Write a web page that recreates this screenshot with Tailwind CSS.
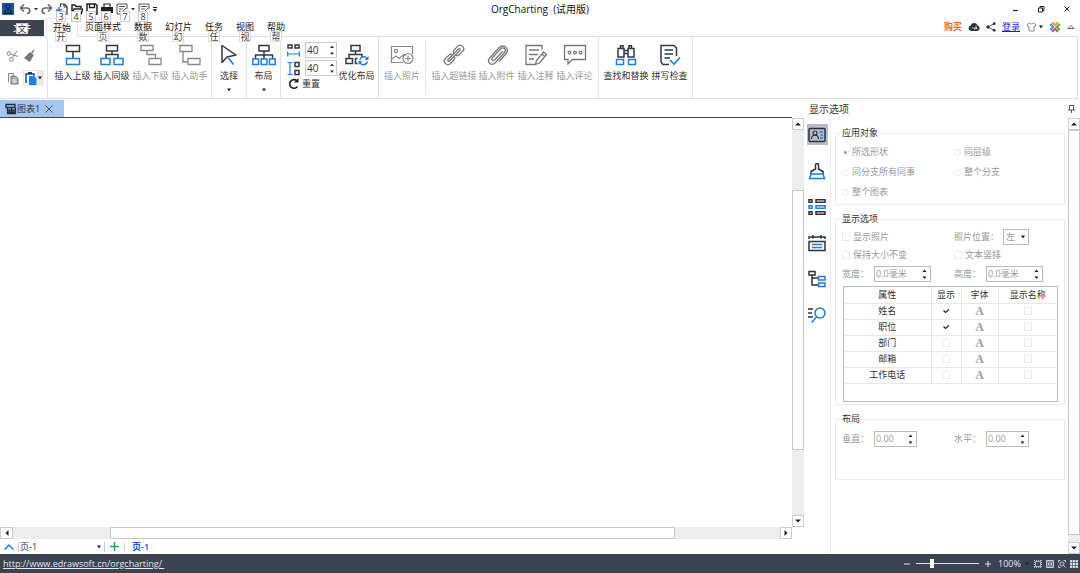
<!DOCTYPE html>
<html lang="zh-CN">
<head>
  <meta charset="UTF-8" />
  <meta name="viewport" content="width=device-width, initial-scale=1.0" />
  <title>OrgCharting (试用版)</title>
  <script src="https://cdn.jsdelivr.net/npm/@tailwindcss/browser@4"></script>
</head>
<body class="h-screen flex flex-col overflow-hidden bg-white text-[#333] text-[9px] leading-[12px] font-['Open_Sans','Noto_Sans_CJK_SC',sans-serif]">

  <!-- title bar -->
  <header class="relative z-20 flex items-center h-[18px] shrink-0">
    <div class="flex items-center gap-[3px] pl-[2px]">
      <svg class="w-3 h-3 mr-[2px]" viewBox="0 0 12 12"><rect width="12" height="12" fill="#15589f"/><path d="M4 2h4v3H4zM6 5v2M3 9V7h6v2M2 9h2v1.500H2zM5 9h2v1.500H5zM8 9h2v1.500H8z" fill="none" stroke="#0b2440"/></svg>
      <button aria-label="撤销"><svg class="w-3 h-3" viewBox="0 0 12 12"><path d="M2 5h6a2.500 2.500 0 0 1 0 5.500M5 1.500 1.500 5 5 8.500" fill="none" stroke="#6b6b6b" stroke-width="1.700"/></svg></button>
      <button aria-label="撤销列表"><svg class="w-1 h-1" viewBox="0 0 4 4"><path d="M0 1h4L2 3.500z" fill="#333"/></svg></button>
      <button aria-label="重做"><svg class="w-3 h-3" viewBox="0 0 12 12"><path d="M10 5H4a2.500 2.500 0 0 0 0 5.500M7 1.500 10.500 5 7 8.500" fill="none" stroke="#6b6b6b" stroke-width="1.700"/></svg></button>
      <button class="relative" aria-label="新建"><svg class="w-3 h-3" viewBox="0 0 12 12"><path d="M4.500 4V1h4L11 3.500V12" fill="none" stroke="#333" stroke-width="1.200"/><path d="M8 1v3h3" fill="none" stroke="#333"/><path d="M0 7h6M3 4v6" stroke="#1a7fe8" stroke-width="1.500"/></svg><kbd class="absolute left-0 top-2 w-[10px] h-[11px] text-center leading-[9px] font-[inherit] text-[9px] text-[#333] bg-white border border-[#ccc]">3</kbd></button>
      <button class="relative" aria-label="打开"><svg class="w-3 h-3" viewBox="0 0 12 12"><path d="M1 11V2h3l1 1.500h5V5M1 11l2-5h9l-2 5z" fill="none" stroke="#222" stroke-width="1.500"/></svg><kbd class="absolute left-0 top-2 w-[10px] h-[11px] text-center leading-[9px] font-[inherit] text-[9px] text-[#333] bg-white border border-[#ccc]">4</kbd></button>
      <button class="relative" aria-label="保存"><svg class="w-3 h-3" viewBox="0 0 12 12"><path d="M1 1h8.500L11 2.500V11H1z" fill="none" stroke="#222" stroke-width="1.500"/><path d="M3.500 1v3.500h5V1" fill="none" stroke="#222" stroke-width="1.300"/></svg><kbd class="absolute left-0 top-2 w-[10px] h-[11px] text-center leading-[9px] font-[inherit] text-[9px] text-[#333] bg-white border border-[#ccc]">5</kbd></button>
      <button class="relative" aria-label="打印"><svg class="w-3 h-3" viewBox="0 0 12 12"><path d="M3 4V1h6v3" fill="none" stroke="#222" stroke-width="1.200"/><path d="M0 4h12v6H0z" fill="#222"/></svg><kbd class="absolute left-0 top-2 w-[10px] h-[11px] text-center leading-[9px] font-[inherit] text-[9px] text-[#333] bg-white border border-[#ccc]">6</kbd></button>
      <button class="relative" aria-label="导出"><svg class="w-3 h-3" viewBox="0 0 12 12"><path d="M11 6V1H1v10h3M3 3.500h6M3 6h4M3 8.500h2" fill="none" stroke="#555"/><path d="M6 9 10.500 4.500" stroke="#1a7fe8"/></svg><kbd class="absolute left-1 top-2 w-[10px] h-[11px] text-center leading-[9px] font-[inherit] text-[9px] text-[#333] bg-white border border-[#ccc]">7</kbd></button>
      <button aria-label="导出列表"><svg class="w-1 h-1" viewBox="0 0 4 4"><path d="M0 1h4L2 3.500z" fill="#333"/></svg></button>
      <button class="relative" aria-label="属性"><svg class="w-3 h-3" viewBox="0 0 12 12"><path d="M11 6V1H1v10h3M3 3.500h6M3 6h4M3 8.500h2" fill="none" stroke="#555"/><path d="M6 9 10.500 4.500" stroke="#1a7fe8"/></svg><kbd class="absolute left-0 top-2 w-[10px] h-[11px] text-center leading-[9px] font-[inherit] text-[9px] text-[#333] bg-white border border-[#ccc]">8</kbd></button>
      <button aria-label="自定义"><svg class="w-1 h-[5px]" viewBox="0 0 4 5"><path d="M0 0h4v1H0zM0 2h4L2 5z" fill="#222"/></svg></button>
    </div>
    <h1 class="absolute inset-x-0 top-[3px] text-center text-[10px] text-[#111] pointer-events-none">OrgCharting&nbsp; (试用版)</h1>
    <div class="flex items-center gap-[18px] ml-auto pr-[9px]">
      <button aria-label="最小化"><svg class="w-2 h-2" viewBox="0 0 8 8"><path d="M2 5.500h5" stroke="#222" stroke-width="1.200"/></svg></button>
      <button aria-label="还原"><svg class="w-2 h-2" viewBox="0 0 8 8"><path d="M1.500 3h4v4h-4zM3 3V1.500h4v4H5.500" fill="none" stroke="#222"/></svg></button>
      <button aria-label="关闭"><svg class="w-2 h-2" viewBox="0 0 8 8"><path d="M1.500 1.500l5 5M6.500 1.500l-5 5" stroke="#222"/></svg></button>
    </div>
  </header>

  <!-- menu row -->
  <nav class="relative z-10 flex h-[18px] shrink-0 text-[#111]">
    <button class="relative w-11 h-4 mt-[2px] bg-[#3b4250] text-white">文件<kbd class="absolute left-4 top-[3px] w-[12px] h-[11px] text-center leading-[9px] font-[inherit] text-[9px] text-[#333] bg-white border border-[#ccc]">文</kbd></button>
    <div class="flex gap-[13px] pl-[2px]">
      <button class="relative h-[19px] px-[6px] -mr-[6px] bg-white border-x border-t border-[#e6e6e6]">开始<kbd class="absolute left-2 top-[12px] w-[12px] h-[11px] text-center leading-[9px] font-[inherit] text-[9px] text-[#444] bg-white border border-[#ddd]">开</kbd></button>
      <button class="relative">页面样式<kbd class="absolute left-3 top-[13px] w-[12px] h-[11px] text-center leading-[9px] font-[inherit] text-[9px] text-[#444] bg-white border border-[#ddd]">页</kbd></button>
      <button class="relative">数据<kbd class="absolute left-[3px] top-[13px] w-[12px] h-[11px] text-center leading-[9px] font-[inherit] text-[9px] text-[#444] bg-white border border-[#ddd]">数</kbd></button>
      <button class="relative">幻灯片<kbd class="absolute left-[7px] top-[13px] w-[12px] h-[11px] text-center leading-[9px] font-[inherit] text-[9px] text-[#444] bg-white border border-[#ddd]">幻</kbd></button>
      <button class="relative">任务<kbd class="absolute left-[3px] top-[13px] w-[12px] h-[11px] text-center leading-[9px] font-[inherit] text-[9px] text-[#444] bg-white border border-[#ddd]">任</kbd></button>
      <button class="relative">视图<kbd class="absolute left-[3px] top-[13px] w-[12px] h-[11px] text-center leading-[9px] font-[inherit] text-[9px] text-[#444] bg-white border border-[#ddd]">视</kbd></button>
      <button class="relative">帮助<kbd class="absolute left-[3px] top-[13px] w-[12px] h-[11px] text-center leading-[9px] font-[inherit] text-[9px] text-[#444] bg-white border border-[#ddd]">帮</kbd></button>
    </div>
    <div class="flex items-center gap-[6px] ml-auto pr-[5px]">
      <a href="#" class="font-bold text-[#ff6a13]">购买</a>
      <button aria-label="云"><svg class="w-3 h-3" viewBox="0 0 12 12"><path d="M3 10a2.800 2.800 0 0 1-.3-5.500A3.600 3.600 0 0 1 9.500 4.500 2.800 2.800 0 0 1 9.300 10z" fill="#2c323b"/><path d="M4 7.500 5.500 6M6 8l2-2.500 1 2z" stroke="#fff" stroke-width=".8" fill="none"/></svg></button>
      <button aria-label="分享"><svg class="w-[10px] h-[10px]" viewBox="0 0 10 10"><path d="M8 1.700 2 5l6 3.300" fill="none" stroke="#2c323b" stroke-width=".8"/><circle cx="2" cy="5" r="1.700" fill="#2c323b"/><circle cx="8.200" cy="1.700" r="1.400" fill="#2c323b"/><circle cx="8.200" cy="8.300" r="1.400" fill="#2c323b"/></svg></button>
      <a href="#" class="text-[#1a1aff] underline">登录</a>
      <button class="flex items-center gap-[2px]" aria-label="皮肤"><svg class="w-[11px] h-[10px]" viewBox="0 0 11 10"><path d="M4 1 1 2.500 2 5l1-.5V9h5V4.500L9 5l1-2.500L7 1C6.500 2.300 4.500 2.300 4 1z" fill="none" stroke="#777" stroke-width=".8"/></svg><svg class="w-1 h-1" viewBox="0 0 4 4"><path d="M0 .5h4L2 3.500z" fill="#222"/></svg></button>
      <button aria-label="亿图"><svg class="w-3 h-3" viewBox="0 0 12 12" stroke-width="2.200" fill="none"><path d="M3 1.200 6 4.200l3-3" stroke="#f9a21b"/><path d="M10.800 3 7.800 6l3 3" stroke="#52b947"/><path d="M9 10.800 6 7.800l-3 3" stroke="#ee3f7c"/><path d="M1.200 9l3-3-3-3" stroke="#2aa7df"/></svg></button>
      <button aria-label="折叠功能区"><svg class="w-2 h-2" viewBox="0 0 8 8"><path d="M1 5.500 4 2.500l3 3z" fill="none" stroke="#555" stroke-width=".9"/></svg></button>
    </div>
  </nav>

  <!-- ribbon -->
  <section class="flex h-[63px] shrink-0 mr-[2px] border-t border-b border-r border-[#dedede]">
    <div class="grid grid-cols-[16px_21px] grid-rows-[22px_22px] gap-x-[1px] w-12 pl-[6px] pt-[8px] border-r border-[#e2e2e2] content-start items-center">
      <button aria-label="剪切"><svg class="w-[14px] h-3" viewBox="0 0 14 12"><g fill="none" stroke="#888"><circle cx="3" cy="3.500" r="1.800"/><circle cx="5.500" cy="9.500" r="1.800"/><path d="M4.800 4.200 12 6.500M6 7.700 11 1"/></g></svg></button>
      <button aria-label="格式刷"><svg class="w-[14px] h-3" viewBox="0 0 14 12"><path d="M11 0 8 4M7 3l3 2.500L6.500 11 2 8z" stroke="#777" stroke-width="1.300" fill="#777"/></svg></button>
      <button aria-label="复制"><svg class="w-[14px] h-[13px]" viewBox="0 0 14 13"><path d="M2.500 10.500v-9h5v2" fill="none" stroke="#888"/><path d="M5 4h4.500L12 6.500V12H5z" fill="#aaa" stroke="#777"/><path d="M6.500 8h4M6.500 10h4" stroke="#fff"/></svg></button>
      <span class="flex h-4 border border-[#e4eaf2]">
        <button aria-label="粘贴" class="pl-[1px]"><svg class="w-[12px] h-[13px]" viewBox="0 0 12 13"><path d="M1 11V2h8v2" fill="none" stroke="#1f3d66" stroke-width="1.400"/><path d="M3 0h4v2H3z" fill="#1f3d66"/><path d="M4 4h5l2.500 2.500V13H4z" fill="#1a7fe8"/></svg></button>
        <button aria-label="粘贴选项" class="grid place-items-center w-[6px] bg-[#e8e8e8]"><svg class="w-1 h-1" viewBox="0 0 4 4"><path d="M0 .5h4L2 3.500z" fill="#222"/></svg></button>
      </span>
    </div>

    <div class="flex items-start pl-[5px] w-[164px] pt-[7px] border-r border-[#e2e2e2]">
      <button class="flex flex-col items-center gap-[4px] w-[39px] whitespace-nowrap"><svg class="w-6 h-[22px]" viewBox="0 0 24 22" fill="none" stroke-width="1.500"><path d="M5.500 1.500h13v6h-13zM12 7.500V14" stroke="#333a44"/><path d="M5.500 14.500h13v6h-13z" stroke="#1a7fe8"/></svg>插入上级</button>
      <button class="flex flex-col items-center gap-[4px] w-[39px] whitespace-nowrap"><svg class="w-6 h-[22px]" viewBox="0 0 24 22" fill="none" stroke-width="1.500"><path d="M6.500 1.500h11v5.500h-11zM12 7v3.500M6 14.500v-4h12v4" stroke="#333a44"/><path d="M1 14.500h9v6H1zM14 14.500h9v6h-9z" stroke="#1a7fe8"/></svg>插入同级</button>
      <button disabled class="flex flex-col items-center gap-[4px] w-[39px] whitespace-nowrap text-[#999]"><svg class="w-6 h-[22px]" viewBox="0 0 24 22" fill="none" stroke="#888" stroke-width="1.300"><path d="M2 1.500h12v5H2zM8 6.500v4h8.500v4M10 14.500h12v6H10z"/></svg>插入下级</button>
      <button disabled class="flex flex-col items-center gap-[4px] w-[39px] whitespace-nowrap text-[#999]"><svg class="w-6 h-[22px]" viewBox="0 0 24 22" fill="none" stroke="#888" stroke-width="1.300"><path d="M2 1.500h12v6H2zM5 7.500V18h5M10 14.500h12v6H10z"/></svg>插入助手</button>
    </div>

    <div class="flex justify-center w-[35px] pt-[7px] border-r border-[#e2e2e2]">
      <button class="flex flex-col items-center gap-[4px] w-[34px] h-[50px] whitespace-nowrap"><svg class="w-6 h-[22px] shrink-0" viewBox="0 0 24 22" fill="none"><path d="M5 1.500v17l5-5.500 9-2z" stroke="#333a44" stroke-width="1.500" stroke-linejoin="round"/><path d="m11.500 14 5 6.500" stroke="#1a7fe8" stroke-width="1.700"/></svg>选择<svg class="w-1 h-1 mt-[2px] shrink-0" viewBox="0 0 4 4"><path d="M0 .5h4L2 3.500z" fill="#222"/></svg></button>
    </div>

    <div class="flex justify-center w-[34px] pt-[7px] border-r border-[#e2e2e2]">
      <button class="flex flex-col items-center gap-[4px] w-[33px] h-[50px] whitespace-nowrap"><svg class="w-6 h-[22px] shrink-0" viewBox="0 0 24 22" fill="none" stroke-width="1.500"><path d="M7 1.500h10v5.500H7zM12 7v8M3.500 15v-4h17v4" stroke="#333a44"/><path d="M.8 15h5.700v5.500H.8zM9.200 15h5.700v5.500H9.200zM17.500 15h5.700v5.500h-5.700z" stroke="#1a7fe8"/></svg>布局<svg class="w-1 h-1 mt-[2px] shrink-0" viewBox="0 0 4 4"><path d="M0 .5h4L2 3.500z" fill="#222"/></svg></button>
    </div>

    <div class="flex w-[98px] pl-[5px] border-r border-[#e2e2e2]">
      <div class="flex flex-col gap-[2px] pt-[5px]">
        <label class="flex items-center gap-[4px]">
          <svg class="w-[15px] h-[15px]" viewBox="0 0 15 15" fill="none"><path d="M2 2h4v3H2zM9 2h4v3H9z" stroke="#333a44" stroke-width="1.500"/><path d="M1.700 8.500v5M13.300 8.500v5M2 11h11" stroke="#1a7fe8" stroke-width="1.200"/></svg>
          <span class="flex w-8 h-4 border border-[#ccc]"><input type="text" value="40" aria-label="水平间距" class="w-5 min-w-0 grow pl-[1px] text-[10px] outline-none" /><svg class="w-2 h-[14px]" viewBox="0 0 8 14"><path d="M2 5h4L4 2.500zM2 9.500h4L4 12z" fill="#333"/></svg></span>
        </label>
        <label class="flex items-center gap-[4px]">
          <svg class="w-[15px] h-[15px]" viewBox="0 0 15 15" fill="none"><path d="M9 1.500h4v4H9zM9 9.500h4v4H9z" stroke="#333a44" stroke-width="1.500"/><path d="M1.500 1.500h5M1.500 13.500h5M4 2v11" stroke="#1a7fe8" stroke-width="1.200"/></svg>
          <span class="flex w-8 h-4 border border-[#ccc]"><input type="text" value="40" aria-label="垂直间距" class="w-5 min-w-0 grow pl-[1px] text-[10px] outline-none" /><svg class="w-2 h-[14px]" viewBox="0 0 8 14"><path d="M2 5h4L4 2.500zM2 9.500h4L4 12z" fill="#333"/></svg></span>
        </label>
        <button class="flex items-center gap-[2px] pl-[2px]"><svg class="w-3 h-3" viewBox="0 0 12 12"><path d="M9 2.800A4.300 4.300 0 1 0 9.500 8.500" fill="none" stroke="#222" stroke-width="1.600"/><path d="M10.500 0v4.500H6z" fill="#222"/></svg>重置</button>
      </div>
      <button class="flex flex-col items-center gap-[4px] w-[39px] pt-[7px] self-start whitespace-nowrap"><svg class="w-6 h-[22px]" viewBox="0 0 24 22" fill="none" stroke-width="1.500"><path d="M6 1.500h9v5.500H6zM10.500 7v4M4 14.500v-4h13v3M1 14.500h6.500v5H1zM12.500 14.500h-2v5h2" stroke="#333a44"/><path d="M22 14.500A4 4 0 0 0 14.800 16M14.800 18.500a4 4 0 0 0 7.500-1" stroke="#1a7fe8"/><path d="M23.500 12v4h-4zM13.500 21v-4h4z" fill="#1a7fe8"/></svg>优化布局</button>
    </div>

    <div class="flex justify-center items-start w-[46px] pt-[7px]">
      <button disabled class="flex flex-col items-center gap-[4px] whitespace-nowrap text-[#999]"><svg class="w-6 h-[22px]" viewBox="0 0 24 22" fill="none" stroke="#888" stroke-width="1.200"><path d="M13 18.500H1.500v-16h21V10"/><circle cx="6" cy="7" r="1.700"/><path d="m2 15 4-3 3 2.500 5-4 2 1"/><circle cx="18" cy="14.500" r="5"/><path d="M18 11.500v6M15 14.500h6"/></svg>插入照片</button>
    </div>
    <div class="w-px h-[53px] mt-1 bg-[#e2e2e2]"></div>

    <div class="flex items-start w-[173px] pl-[5px] pt-[7px] border-r border-[#e2e2e2] text-[#999]">
      <button disabled class="flex flex-col items-center gap-[4px] w-[46px] whitespace-nowrap"><svg class="w-6 h-[22px]" viewBox="0 0 24 22" fill="none" stroke="#777" stroke-width="1.300"><g transform="rotate(-45 12 11)"><rect x="0" y="7.500" width="11" height="7" rx="3"/><rect x="13" y="7.500" width="11" height="7" rx="3"/><path d="M8 12H4.500a1 1 0 0 1 0-2h15a1 1 0 0 1 0 2H8" fill="#fff"/></g></svg>插入超链接</button>
      <button disabled class="flex flex-col items-center gap-[4px] w-[39px] whitespace-nowrap"><svg class="w-6 h-[22px]" viewBox="0 0 24 22" fill="none" stroke="#777" stroke-width="1.300" stroke-linecap="round"><path d="m17.500 7.500-8 8.500c-1.500 1.500-3.700-.5-2.300-2L15.500 5c2.800-2.800 6.500.5 4 3.500L10.500 18.500c-4.300 4.300-9.500-.7-5.500-5L14 3.800c4.500-4.500 11 1.200 7 6L14.500 17"/></svg>插入附件</button>
      <button disabled class="flex flex-col items-center gap-[4px] w-[39px] whitespace-nowrap"><svg class="w-6 h-[22px]" viewBox="0 0 24 22" fill="none" stroke="#777" stroke-width="1.300"><path d="M18 5.500V1.500H2v19h9M5 6h10M5 10.500h9M5 15h5"/><path d="m12.500 16.500 7-8.500 3 2.500-7 8.500-4 1.500zM18 10l2.500 2.300"/></svg>插入注释</button>
      <button disabled class="flex flex-col items-center gap-[4px] w-[39px] whitespace-nowrap"><svg class="w-6 h-[22px]" viewBox="0 0 24 22" fill="none" stroke="#777" stroke-width="1.300"><path d="M1.500 1.500h21v14H9.500L5 20v-4.500H1.500z"/><circle cx="6.500" cy="8.500" r="1.400"/><circle cx="12" cy="8.500" r="1.400"/><circle cx="17.500" cy="8.500" r="1.400"/></svg>插入评论</button>
    </div>

    <div class="flex items-start w-[94px] pl-[4px] pt-[7px] border-r border-[#e2e2e2]">
      <button class="flex flex-col items-center gap-[4px] w-[46px] whitespace-nowrap"><svg class="w-6 h-[22px]" viewBox="0 0 24 22" fill="none" stroke-width="1.500"><path d="M6.500 4V1.700h2.500V4M15 4V1.700h2.500V4M4 13V4.500h6V13zM14 13V4.500h6V13zM10 6.500h4M10 9.500h4" stroke="#333a44"/><path d="M2.500 15.500h7v5h-7zM14.500 15.500h7v5h-7z" stroke="#1a7fe8"/></svg>查找和替换</button>
      <button class="flex flex-col items-center gap-[4px] w-[41px] whitespace-nowrap"><svg class="w-6 h-[22px]" viewBox="0 0 24 22" fill="none" stroke-width="1.500"><path d="M18.500 12V4l-2.500-2.500H3V18l2 2.500h6M6.500 6H15M6.500 10H15M6.500 14H12" stroke="#333a44"/><path d="m12 16 4 4 6-6.500" stroke="#1a7fe8" stroke-width="1.700"/></svg>拼写检查</button>
    </div>
  </section>

  <main class="flex grow min-h-0 pt-px">
    <!-- document area -->
    <section class="flex flex-col grow min-w-0">
      <div class="flex h-[18px] shrink-0">
        <div class="flex grow border-b border-[#444]">
          <button class="flex items-center w-[64px] pl-[5px] bg-[#a3c6ee] text-[#333]">
            <svg class="w-3 h-3" viewBox="0 0 12 12"><path d="M1 1.500h9v3H1zM2.500 4.500v6h8v-6M4 7h5v2H4z" fill="none" stroke="#222d3b" stroke-width="1.300"/><path d="M6.500 5v6" stroke="#222d3b"/></svg>图表1
            <svg class="w-2 h-2 ml-[5px]" viewBox="0 0 8 8"><path d="m.5.5 7 7M7.500.5l-7 7" stroke="#444" stroke-width=".9"/></svg>
          </button>
        </div>
        <div class="w-3"></div>
      </div>
      <div class="flex grow min-h-0">
        <div class="grow bg-white"></div>
        <div class="flex flex-col w-3 bg-[#ededed]">
          <button aria-label="向上" class="grid place-items-center h-3 bg-white border border-[#ccc]"><svg class="w-[6px] h-1" viewBox="0 0 6 4"><path d="M0 3.500h6L3 .5z" fill="#222"/></svg></button>
          <div class="grow-60"></div>
          <div class="grow-260 bg-white border border-[#c8c8c8]"></div>
          <div class="grow-66"></div>
          <button aria-label="向下" class="grid place-items-center h-3 bg-white border border-[#ccc]"><svg class="w-[6px] h-1" viewBox="0 0 6 4"><path d="M0 .5h6L3 3.500z" fill="#222"/></svg></button>
        </div>
      </div>
      <div class="flex h-3 shrink-0 mr-3 bg-[#ededed]">
        <button aria-label="向左" class="grid place-items-center w-[13px] bg-white border border-[#ccc]"><svg class="w-1 h-[6px]" viewBox="0 0 4 6"><path d="M3.500 0v6L.5 3z" fill="#222"/></svg></button>
        <div class="grow-97"></div>
        <div class="grow-564 bg-white border border-[#c8c8c8]"></div>
        <div class="grow-105"></div>
        <button aria-label="向右" class="grid place-items-center w-3 bg-white border border-[#ccc]"><svg class="w-1 h-[6px]" viewBox="0 0 4 6"><path d="M.5 0v6l3-3z" fill="#222"/></svg></button>
      </div>
      <div class="flex items-center h-[15px] shrink-0 pl-[4px]">
        <button aria-label="展开"><svg class="w-[10px] h-2" viewBox="0 0 10 8"><path d="m.7 6.500 4.300-4.500 4.300 4.500" fill="none" stroke="#1a7fe8" stroke-width="1.500"/></svg></button>
        <span class="relative flex items-center w-[87px] h-[10px] ml-[4px] border-x border-[#ccc]">
          <select aria-label="页面" class="w-full h-3 pl-px appearance-none bg-transparent text-[#333] outline-none"><option>页-1</option></select>
          <svg class="absolute right-[3px] w-1 h-1 pointer-events-none" viewBox="0 0 4 4"><path d="M0 .5h4L2 3.500z" fill="#222"/></svg>
        </span>
        <button aria-label="新建页" class="ml-[5px]"><svg class="w-[9px] h-[9px]" viewBox="0 0 9 9"><path d="M4.500 0v9M0 4.500h9" stroke="#1faa59" stroke-width="1.500"/></svg></button>
        <span class="w-px h-2 mx-[5px] bg-[#ccc]"></span>
        <button class="pl-[2px] font-semibold text-[#1a55d8]">页-1</button>
      </div>
    </section>

    <!-- options panel -->
    <aside class="flex flex-col w-[276px] shrink-0">
      <div class="flex items-center justify-between h-[18px] shrink-0 pl-[5px] pr-[5px]">
        <h2 class="text-[10px] text-[#333]">显示选项</h2>
        <button aria-label="固定"><svg class="w-[7px] h-2" viewBox="0 0 7 8"><path d="M1.500 5V.5h4V5M0 5h7M3.500 5v3" fill="none" stroke="#445" stroke-width=".9"/></svg></button>
      </div>
      <div class="flex grow min-h-0">
        <div class="flex flex-col items-center gap-[15px] w-[27px] shrink-0 pt-[6px] border-r border-[#eee]">
          <button aria-label="显示选项" class="grid place-items-center w-[21px] h-[21px] bg-[#b5bcc8]"><svg class="w-[18px] h-[18px]" viewBox="0 0 18 18" fill="none"><rect x="1" y="2.500" width="16" height="13" rx="1" stroke="#2c323b" stroke-width="1.500"/><circle cx="7" cy="7" r="2" stroke="#2c323b" stroke-width="1.200"/><path d="M3.500 13c0-5 7-5 7 0" stroke="#2c323b" stroke-width="1.200"/><path d="M11.500 6H15M12.500 9H15M12 12h3" stroke="#1a7fe8" stroke-width="1.300"/></svg></button>
          <button aria-label="样式" class="grid place-items-center w-[21px] h-[21px]"><svg class="w-[18px] h-[18px]" viewBox="0 0 18 18" fill="none"><path d="M3 12V9.500L7.500 7V3a1.500 1.500 0 0 1 3 0v4L15 9.500V12" stroke="#2c323b" stroke-width="1.500"/><path d="M3 12h12l1.500 4.500h-15z" stroke="#1a7fe8" stroke-width="1.500"/></svg></button>
          <button aria-label="列表" class="grid place-items-center w-[21px] h-[21px]"><svg class="w-[18px] h-[18px]" viewBox="0 0 18 18" fill="none" stroke-width="1.500"><path d="M1 1.800h3v2.500H1zM8 1.800h9v2.500H8zM1 13.700h3v2.500H1zM8 13.700h9v2.500H8z" stroke="#2c323b"/><path d="M1 7.700h3v2.500H1zM8 7.700h9v2.500H8z" stroke="#1a7fe8"/></svg></button>
          <button aria-label="日期" class="grid place-items-center w-[21px] h-[21px]"><svg class="w-[18px] h-[18px]" viewBox="0 0 18 18" fill="none" stroke-width="1.500"><path d="M1 7.500h16v9H1zM1 5V3h16v2M5 1v3.500M13 1v3.500" stroke="#2c323b"/><path d="M4 10.500h10M4 13.500h10" stroke="#1a7fe8"/></svg></button>
          <button aria-label="层级" class="grid place-items-center w-[21px] h-[21px]"><svg class="w-[18px] h-[18px]" viewBox="0 0 18 18" fill="none" stroke-width="1.500"><path d="M1 1.500h6v3.500H1zM4 5v10h6M4 8h6" stroke="#2c323b"/><path d="M10.500 6.500H17V10h-6.500zM10.500 13H17v3.500h-6.500z" stroke="#1a7fe8"/></svg></button>
          <button aria-label="搜索" class="grid place-items-center w-[21px] h-[21px]"><svg class="w-[18px] h-[18px]" viewBox="0 0 18 18" fill="none" stroke-width="1.500"><path d="M0 3h5M0 7h4M0 11h5" stroke="#2c323b"/><circle cx="12" cy="7" r="5" stroke="#1a7fe8"/><path d="M8.500 11 3.500 16.500" stroke="#1a7fe8"/></svg></button>
        </div>

        <form class="flex flex-col gap-[8px] grow basis-0 min-w-0 pl-[4px] pr-[3px] pt-[9px] text-[#999]">
          <fieldset class="min-w-0 border border-[#ececec] px-[5px] pb-[2px] pt-[3px]">
            <legend class="px-px text-[#333]">应用对象</legend>
            <div class="grid grid-cols-[112px_1fr] auto-rows-[20px] items-center pl-[1px]">
              <label class="flex items-center gap-[3px]"><input type="radio" name="target" disabled checked class="appearance-none grid place-items-center w-[7px] h-[7px] rounded-full border border-[#eee] before:w-[3px] before:h-[3px] before:rounded-full before:bg-[#999]" />所选形状</label>
              <label class="flex items-center gap-[3px]"><input type="radio" name="target" disabled class="appearance-none w-[7px] h-[7px] rounded-full border border-[#ececec]" />同层级</label>
              <label class="flex items-center gap-[3px]"><input type="radio" name="target" disabled class="appearance-none w-[7px] h-[7px] rounded-full border border-[#ececec]" />同分支所有同事</label>
              <label class="flex items-center gap-[3px]"><input type="radio" name="target" disabled class="appearance-none w-[7px] h-[7px] rounded-full border border-[#ececec]" />整个分支</label>
              <label class="flex items-center gap-[3px]"><input type="radio" name="target" disabled class="appearance-none w-[7px] h-[7px] rounded-full border border-[#ececec]" />整个图表</label>
            </div>
          </fieldset>

          <fieldset class="min-w-0 border border-[#ececec] px-[5px] pb-[2px] pt-[3px]">
            <legend class="px-px text-[#333]">显示选项</legend>
            <div class="grid grid-cols-[112px_1fr] grid-rows-[18px_18px_20px] items-center pl-[1px]">
              <label class="flex items-center gap-[3px]"><input type="checkbox" disabled class="appearance-none w-2 h-2 border border-[#ececec]" />显示照片</label>
              <label class="flex items-center">照片位置：
                <span class="relative flex items-center w-[26px] h-4 ml-[4px] border border-[#bbb]"><select disabled class="w-full h-[14px] pl-[2px] appearance-none bg-white outline-none"><option>左</option></select><svg class="absolute right-[3px] w-1 h-1" viewBox="0 0 4 4"><path d="M0 .5h4L2 3.500z" fill="#222"/></svg></span></label>
              <label class="flex items-center gap-[3px]"><input type="checkbox" disabled class="appearance-none w-2 h-2 border border-[#ececec]" />保持大小不变</label>
              <label class="flex items-center gap-[3px]"><input type="checkbox" disabled class="appearance-none w-2 h-2 border border-[#ececec]" />文本竖排</label>
              <label class="flex items-center"><span class="w-8">宽度：</span><span class="flex w-[57px] h-4 border border-[#bbb]"><input type="text" disabled value="0.0毫米" class="w-full min-w-0 pl-[1px] outline-none" /><svg class="w-[10px] h-[14px] shrink-0" viewBox="0 0 10 14"><path d="M2.500 5h4l-2-2.500zM2.500 9.500h4l-2 2.500z" fill="#222"/></svg></span></label>
              <label class="flex items-center"><span class="w-8">高度：</span><span class="flex w-[57px] h-4 border border-[#bbb]"><input type="text" disabled value="0.0毫米" class="w-full min-w-0 pl-[1px] outline-none" /><svg class="w-[10px] h-[14px] shrink-0" viewBox="0 0 10 14"><path d="M2.500 5h4l-2-2.500zM2.500 9.500h4l-2 2.500z" fill="#222"/></svg></span></label>
            </div>
            <div class="h-[116px] mt-[2px] ml-[2px] mr-px border border-[#bbb]">
              <table class="w-full table-fixed border-collapse text-center text-[#333]">
                <colgroup><col class="w-[87px]" /><col class="w-[30px]" /><col class="w-[37px]" /><col /></colgroup>
                <thead>
                  <tr class="h-4 border-b border-[#e8e8e8]"><th class="p-0 font-normal">属性</th><th class="p-0 font-normal border-x border-[#e8e8e8]">显示</th><th class="p-0 font-normal border-r border-[#e8e8e8]">字体</th><th class="p-0 font-normal">显示名称</th></tr>
                </thead>
                <tbody>
                  <tr class="h-4 border-b border-[#e8e8e8]"><td class="p-0">姓名</td><td class="p-0 border-x border-[#e8e8e8]"><svg class="w-2 h-2 mx-auto" viewBox="0 0 8 8"><path d="m1.500 3.500 2 2 3.500-3" fill="none" stroke="#222" stroke-width="1.200"/></svg></td><td class="p-0 border-r border-[#e8e8e8] font-['Liberation_Serif',serif] font-bold text-[12px] text-[#999]">A</td><td class="p-0"><input type="checkbox" disabled aria-label="姓名显示名称" class="block mx-auto appearance-none w-2 h-2 border border-[#ececec]" /></td></tr>
                  <tr class="h-4 border-b border-[#e8e8e8]"><td class="p-0">职位</td><td class="p-0 border-x border-[#e8e8e8]"><svg class="w-2 h-2 mx-auto" viewBox="0 0 8 8"><path d="m1.500 3.500 2 2 3.500-3" fill="none" stroke="#222" stroke-width="1.200"/></svg></td><td class="p-0 border-r border-[#e8e8e8] font-['Liberation_Serif',serif] font-bold text-[12px] text-[#999]">A</td><td class="p-0"><input type="checkbox" disabled aria-label="职位显示名称" class="block mx-auto appearance-none w-2 h-2 border border-[#ececec]" /></td></tr>
                  <tr class="h-4 border-b border-[#e8e8e8]"><td class="p-0">部门</td><td class="p-0 border-x border-[#e8e8e8]"><input type="checkbox" disabled aria-label="部门显示" class="block mx-auto appearance-none w-2 h-2 border border-[#ececec]" /></td><td class="p-0 border-r border-[#e8e8e8] font-['Liberation_Serif',serif] font-bold text-[12px] text-[#999]">A</td><td class="p-0"><input type="checkbox" disabled aria-label="部门显示名称" class="block mx-auto appearance-none w-2 h-2 border border-[#ececec]" /></td></tr>
                  <tr class="h-4 border-b border-[#e8e8e8]"><td class="p-0">邮箱</td><td class="p-0 border-x border-[#e8e8e8]"><input type="checkbox" disabled aria-label="邮箱显示" class="block mx-auto appearance-none w-2 h-2 border border-[#ececec]" /></td><td class="p-0 border-r border-[#e8e8e8] font-['Liberation_Serif',serif] font-bold text-[12px] text-[#999]">A</td><td class="p-0"><input type="checkbox" disabled aria-label="邮箱显示名称" class="block mx-auto appearance-none w-2 h-2 border border-[#ececec]" /></td></tr>
                  <tr class="h-4 border-b border-[#e8e8e8]"><td class="p-0">工作电话</td><td class="p-0 border-x border-[#e8e8e8]"><input type="checkbox" disabled aria-label="工作电话显示" class="block mx-auto appearance-none w-2 h-2 border border-[#ececec]" /></td><td class="p-0 border-r border-[#e8e8e8] font-['Liberation_Serif',serif] font-bold text-[12px] text-[#999]">A</td><td class="p-0"><input type="checkbox" disabled aria-label="工作电话显示名称" class="block mx-auto appearance-none w-2 h-2 border border-[#ececec]" /></td></tr>
                </tbody>
              </table>
            </div>
          </fieldset>

          <fieldset class="min-w-0 border border-[#ececec] px-[5px] pb-[32px] pt-[6px]">
            <legend class="px-px text-[#333]">布局</legend>
            <div class="grid grid-cols-[112px_1fr] items-center pl-[1px]">
              <label class="flex items-center"><span class="w-8">垂直：</span><span class="flex w-[43px] h-4 border border-[#bbb]"><input type="text" disabled value="0.00" class="w-full min-w-0 pl-[1px] outline-none" /><svg class="w-[10px] h-[14px] shrink-0" viewBox="0 0 10 14"><path d="M2.500 5h4l-2-2.500zM2.500 9.500h4l-2 2.500z" fill="#222"/></svg></span></label>
              <label class="flex items-center"><span class="w-8">水平：</span><span class="flex w-[43px] h-4 border border-[#bbb]"><input type="text" disabled value="0.00" class="w-full min-w-0 pl-[1px] outline-none" /><svg class="w-[10px] h-[14px] shrink-0" viewBox="0 0 10 14"><path d="M2.500 5h4l-2-2.500zM2.500 9.500h4l-2 2.500z" fill="#222"/></svg></span></label>
            </div>
          </fieldset>
        </form>

        <div class="flex flex-col w-3 shrink-0 bg-[#ededed]">
          <button aria-label="向上" class="grid place-items-center h-3 bg-white border border-[#ccc]"><svg class="w-[6px] h-1" viewBox="0 0 6 4"><path d="M0 3.500h6L3 .5z" fill="#222"/></svg></button>
          <div class="grow bg-white border border-[#c8c8c8]"></div>
          <div class="h-[7px]"></div>
          <button aria-label="向下" class="grid place-items-center h-3 bg-white border border-[#ccc]"><svg class="w-[6px] h-1" viewBox="0 0 6 4"><path d="M0 .5h6L3 3.500z" fill="#222"/></svg></button>
        </div>
      </div>
    </aside>
  </main>

  <!-- status bar -->
  <footer class="flex items-center h-[19px] shrink-0 pl-[3px] pr-[2px] bg-[#3b4250] text-[#e6e9ee]">
    <a href="#" class="underline whitespace-pre">http://www.edrawsoft.cn/orgcharting/ </a>
    <div class="flex items-center ml-auto">
      <button aria-label="缩小"><svg class="w-[6px] h-[6px]" viewBox="0 0 6 6"><path d="M0 3h6" stroke="#e6e9ee"/></svg></button>
      <input type="range" min="0" max="100" value="23" aria-label="缩放" class="appearance-none w-[63px] h-[10px] mx-[6px] bg-[linear-gradient(#dfe3e8,#dfe3e8)] bg-[length:100%_1px] bg-center bg-no-repeat [&::-webkit-slider-thumb]:appearance-none [&::-webkit-slider-thumb]:w-1 [&::-webkit-slider-thumb]:h-[9px] [&::-webkit-slider-thumb]:bg-white" />
      <button aria-label="放大"><svg class="w-[6px] h-[6px]" viewBox="0 0 6 6"><path d="M0 3h6M3 0v6" stroke="#e6e9ee"/></svg></button>
      <button class="flex items-center gap-[4px] w-[36px] ml-[7px]">100%<svg class="w-1 h-1 shrink-0" viewBox="0 0 4 4"><path d="M0 .5h4L2 3.500z" fill="#1d222b"/></svg></button>
      <div class="flex gap-[4px]">
        <button aria-label="适合页面"><svg class="w-2 h-2" viewBox="0 0 8 8"><path d="M1.500 1.500h5v5h-5z" fill="none" stroke="#d5d9df" stroke-width=".8"/><path d="M0 .5h8M0 7.500h8M.5 0v8M7.500 0v8" fill="none" stroke="#d5d9df" stroke-width=".8" stroke-dasharray="1 1"/></svg></button>
        <button aria-label="适合宽度"><svg class="w-2 h-2" viewBox="0 0 8 8"><path d="M.5.5h7v7h-7zM1 2h6M1 6h6M1.500 4h5M3 3 2 4l1 1M5 3l1 1-1 1" fill="none" stroke="#d5d9df" stroke-width=".9"/></svg></button>
        <button aria-label="区域缩放"><svg class="w-2 h-2" viewBox="0 0 8 8"><path d="M.5 2.500v-2h2M5.500.5h2v2M.5 5.500v2h2M5.500 5.500l2 2" fill="none" stroke="#d5d9df" stroke-width=".9"/><circle cx="4" cy="4" r="2" fill="none" stroke="#d5d9df" stroke-width=".9"/></svg></button>
        <button aria-label="网格"><svg class="w-2 h-2" viewBox="0 0 8 8"><path d="M0 0h8v8H0z" fill="#d5d9df"/><path d="M2.500 0v8M5.500 0v8M0 2.500h8M0 5.500h8" stroke="#3b4250" stroke-width=".6"/></svg></button>
      </div>
    </div>
  </footer>
</body>
</html>
